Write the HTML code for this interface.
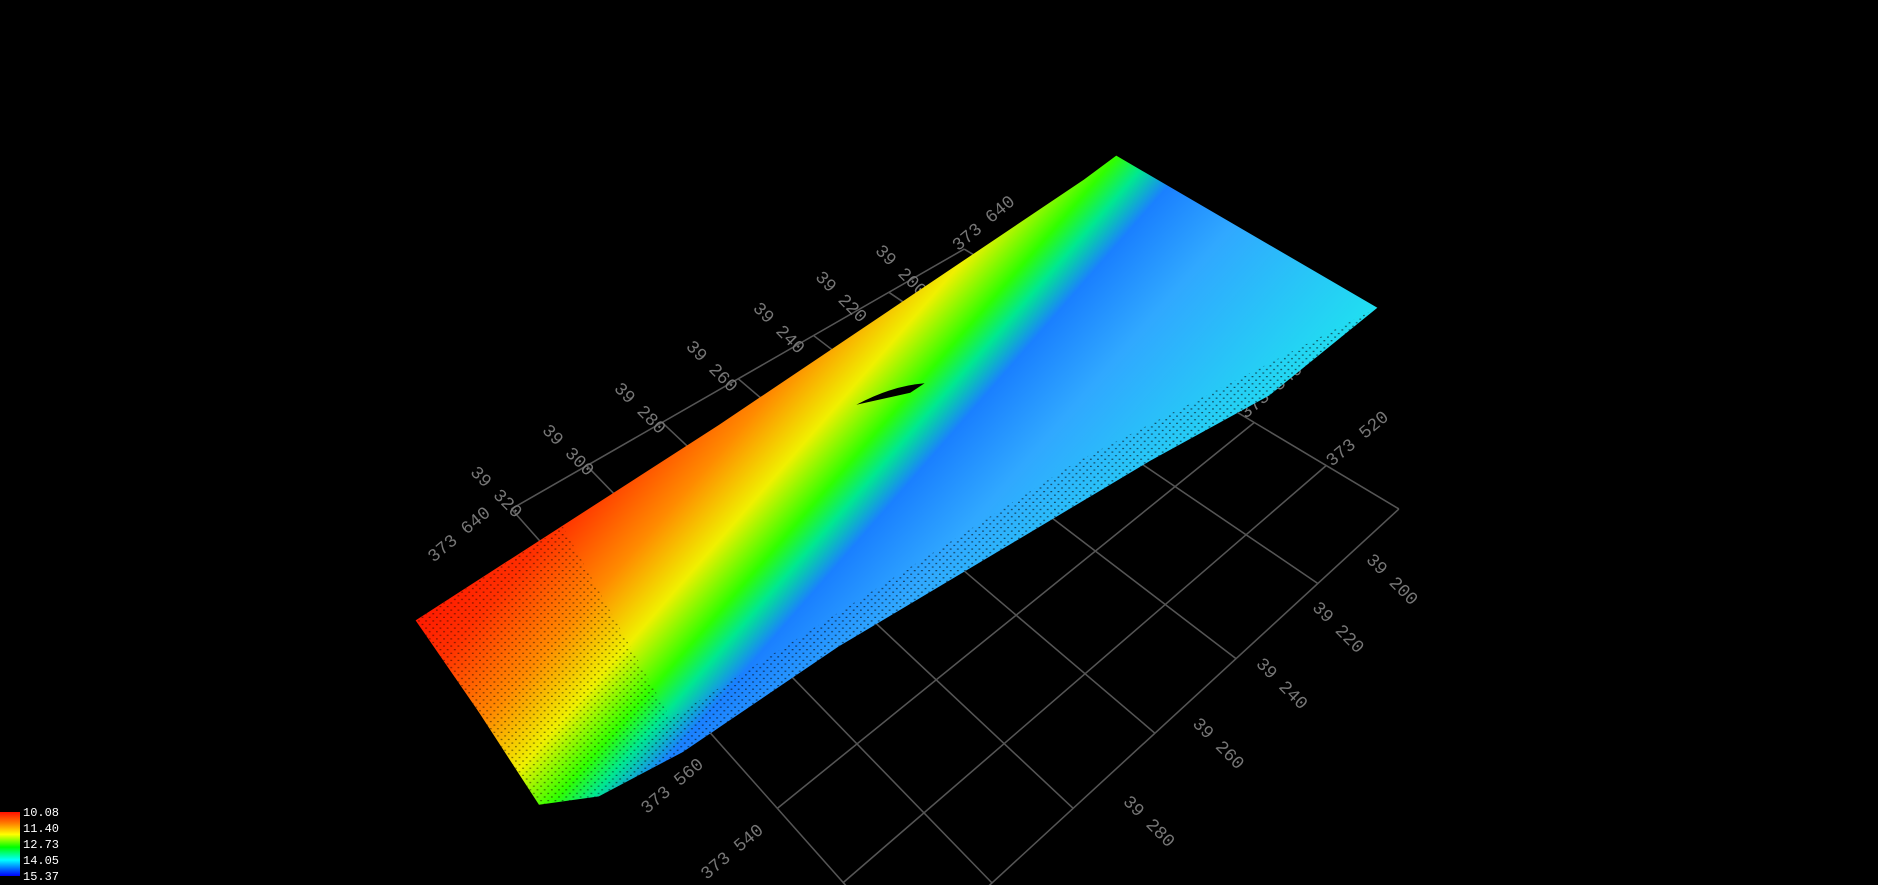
<!DOCTYPE html>
<html><head><meta charset="utf-8"><style>
html,body{margin:0;padding:0;background:#000;width:1878px;height:885px;overflow:hidden}
svg{position:absolute;left:0;top:0}
.leg{position:absolute;left:0;top:812px;width:20px;height:64px;background:linear-gradient(#ff1000,#ff8000 18%,#ffff00 35%,#00ff00 55%,#00ffff 75%,#0060ff 90%,#0000ff)}
.lab{position:absolute;left:23px;color:#fff;font:12px "Liberation Mono",monospace;line-height:12px}
</style></head><body>
<svg width="1878" height="885" viewBox="0 0 1568 739" preserveAspectRatio="none">
<defs>
<linearGradient id="g" gradientUnits="userSpaceOnUse" x1="452" y1="394" x2="783" y2="683">
<stop offset="0" stop-color="#ff1800"/><stop offset="0.09" stop-color="#ff3000"/>
<stop offset="0.23" stop-color="#ff8a00"/><stop offset="0.34" stop-color="#f0f000"/>
<stop offset="0.43" stop-color="#30ff00"/><stop offset="0.48" stop-color="#00e890"/>
<stop offset="0.54" stop-color="#1a80ff"/><stop offset="0.68" stop-color="#30a8ff"/>
<stop offset="1" stop-color="#20e0f0"/>
</linearGradient>
<pattern id="sp" width="6" height="6" patternUnits="userSpaceOnUse">
<rect x="1" y="2" width="1.5" height="1" fill="#000"/><rect x="4" y="5" width="1.5" height="1" fill="#000"/>
</pattern>
</defs>
<g stroke="#555" stroke-width="1.3" fill="none">
<line x1="427" y1="425" x2="760" y2="800"/><line x1="490" y1="389" x2="828" y2="737"/>
<line x1="553" y1="353" x2="896" y2="675"/><line x1="616" y1="316" x2="964" y2="612"/>
<line x1="679" y1="280" x2="1032" y2="550"/><line x1="742" y1="244" x2="1100" y2="487"/>
<line x1="805" y1="208" x2="1168" y2="425"/>
<line x1="427" y1="425" x2="805" y2="208"/><line x1="482" y1="487" x2="865" y2="244"/>
<line x1="538" y1="550" x2="926" y2="280"/><line x1="593" y1="612" x2="986" y2="316"/>
<line x1="649" y1="675" x2="1047" y2="353"/><line x1="704" y1="737" x2="1107" y2="389"/>
<line x1="760" y1="800" x2="1168" y2="425"/>
</g>
<g fill="#777" font-family="Liberation Mono, monospace" font-size="15">
<text transform="translate(392,395) rotate(45)">39 320</text>
<text transform="translate(452,360) rotate(45)">39 300</text>
<text transform="translate(512,325) rotate(45)">39 280</text>
<text transform="translate(572,290) rotate(45)">39 260</text>
<text transform="translate(628,258) rotate(45)">39 240</text>
<text transform="translate(680,232) rotate(45)">39 220</text>
<text transform="translate(730,210) rotate(45)">39 200</text>
<text transform="translate(800,210) rotate(-40)">373 640</text>
<text transform="translate(362,470) rotate(-40)">373 640</text>
<text transform="translate(540,680) rotate(-40)">373 560</text>
<text transform="translate(590,735) rotate(-40)">373 540</text>
<text transform="translate(1040,350) rotate(-40)">373 540</text>
<text transform="translate(1112,390) rotate(-40)">373 520</text>
<text transform="translate(1140,468) rotate(45)">39 200</text>
<text transform="translate(1095,508) rotate(45)">39 220</text>
<text transform="translate(1048,555) rotate(45)">39 240</text>
<text transform="translate(995,605) rotate(45)">39 260</text>
<text transform="translate(937,670) rotate(45)">39 280</text>
</g>
<polygon points="347,518 600,355 905,150 932,130 1150,257 1060,330 960,385 700,540 570,628 500,665 450,672 400,595" fill="url(#g)"/>
<polygon points="347,518 470,440 560,600 500,665 450,672 400,595" fill="url(#sp)" opacity="0.5"/>
<polygon points="560,600 900,385 1150,257 1060,330 960,385 700,540 570,628 500,665" fill="url(#sp)" opacity="0.6"/>
<path d="M715,338 Q745,322 772,320 L760,328 Z" fill="#000"/>
</svg>
<div class="leg"></div>
<div class="lab" style="top:807px">10.08</div>
<div class="lab" style="top:823px">11.40</div>
<div class="lab" style="top:839px">12.73</div>
<div class="lab" style="top:855px">14.05</div>
<div class="lab" style="top:871px">15.37</div>
</body></html>
